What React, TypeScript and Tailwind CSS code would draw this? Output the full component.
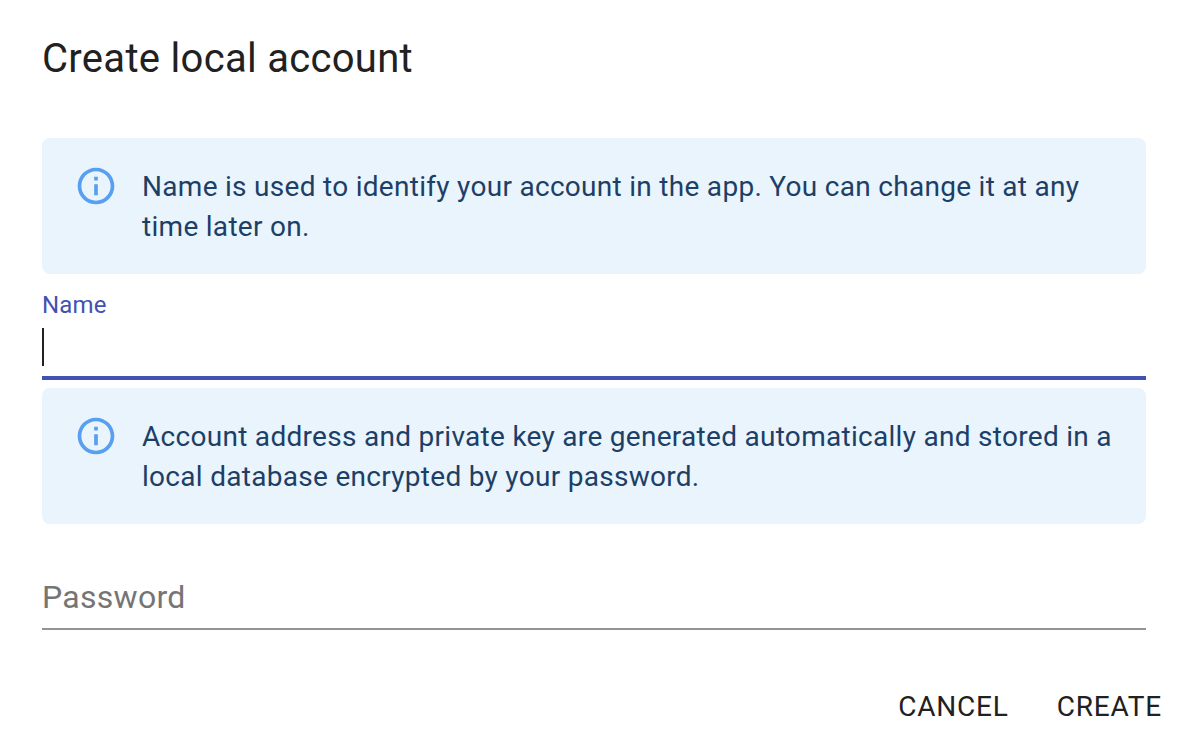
import React from "react";

function Notice({ lines }: { lines: string[] }) {
  return (
    <div className="flex h-[136px] rounded-[8px] bg-[#e9f4fd] px-8 pt-[26px]">
      <svg viewBox="0 0 24 24" className="size-11 shrink-0" fill="#579ff0">
        <path d="M11 7h2v2h-2zM11 11h2v6h-2zM12 2C6.48 2 2 6.48 2 12s4.48 10 10 10 10-4.48 10-10S17.52 2 12 2zm0 18c-4.41 0-8-3.59-8-8s3.59-8 8-8 8 3.59 8 8-3.59 8-8 8z" />
      </svg>
      <p className="mt-[3px] ml-6 text-[28px] leading-[40px] tracking-[0.29px] whitespace-nowrap text-[#1d3f66]">
        {lines[0]}
        <br />
        {lines[1]}
      </p>
    </div>
  );
}

export default function App() {
  return (
    <main className="h-[752px] w-[1190px] overflow-hidden bg-white pt-[27px] font-['Roboto',sans-serif] text-[#212121]">
      <div className="ml-[42px] w-[1104px]">
        <h1 className="mb-[47px] h-16 text-[40px] leading-[64px] font-normal tracking-[0.3px]">Create local account</h1>
        <Notice lines={["Name is used to identify your account in the app. You can change it at any", "time later on."]} />
        <div className="h-[106px] border-b-4 border-[#4252b1]">
          <div className="pt-[15px] text-[24px] leading-[32px] tracking-[0.2px] text-[#4252b1]">Name</div>
          <div className="mt-[7px] h-[38px] w-0.5 bg-[#212121]" />
        </div>
        <div className="mt-2">
          <Notice lines={["Account address and private key are generated automatically and stored in a", "local database encrypted by your password."]} />
        </div>
        <div className="mt-12 h-[58px] border-b-2 border-[#949494] pt-[6px] text-[32px] leading-[38px] tracking-[0.28px] text-[#757575]">Password</div>
      </div>
      <div className="mt-[52px] mr-[28px] flex justify-end gap-[48px] text-[28px] leading-[49px] tracking-[0.8px]">
        <button>CANCEL</button>
        <button>CREATE</button>
      </div>
    </main>
  );
}
